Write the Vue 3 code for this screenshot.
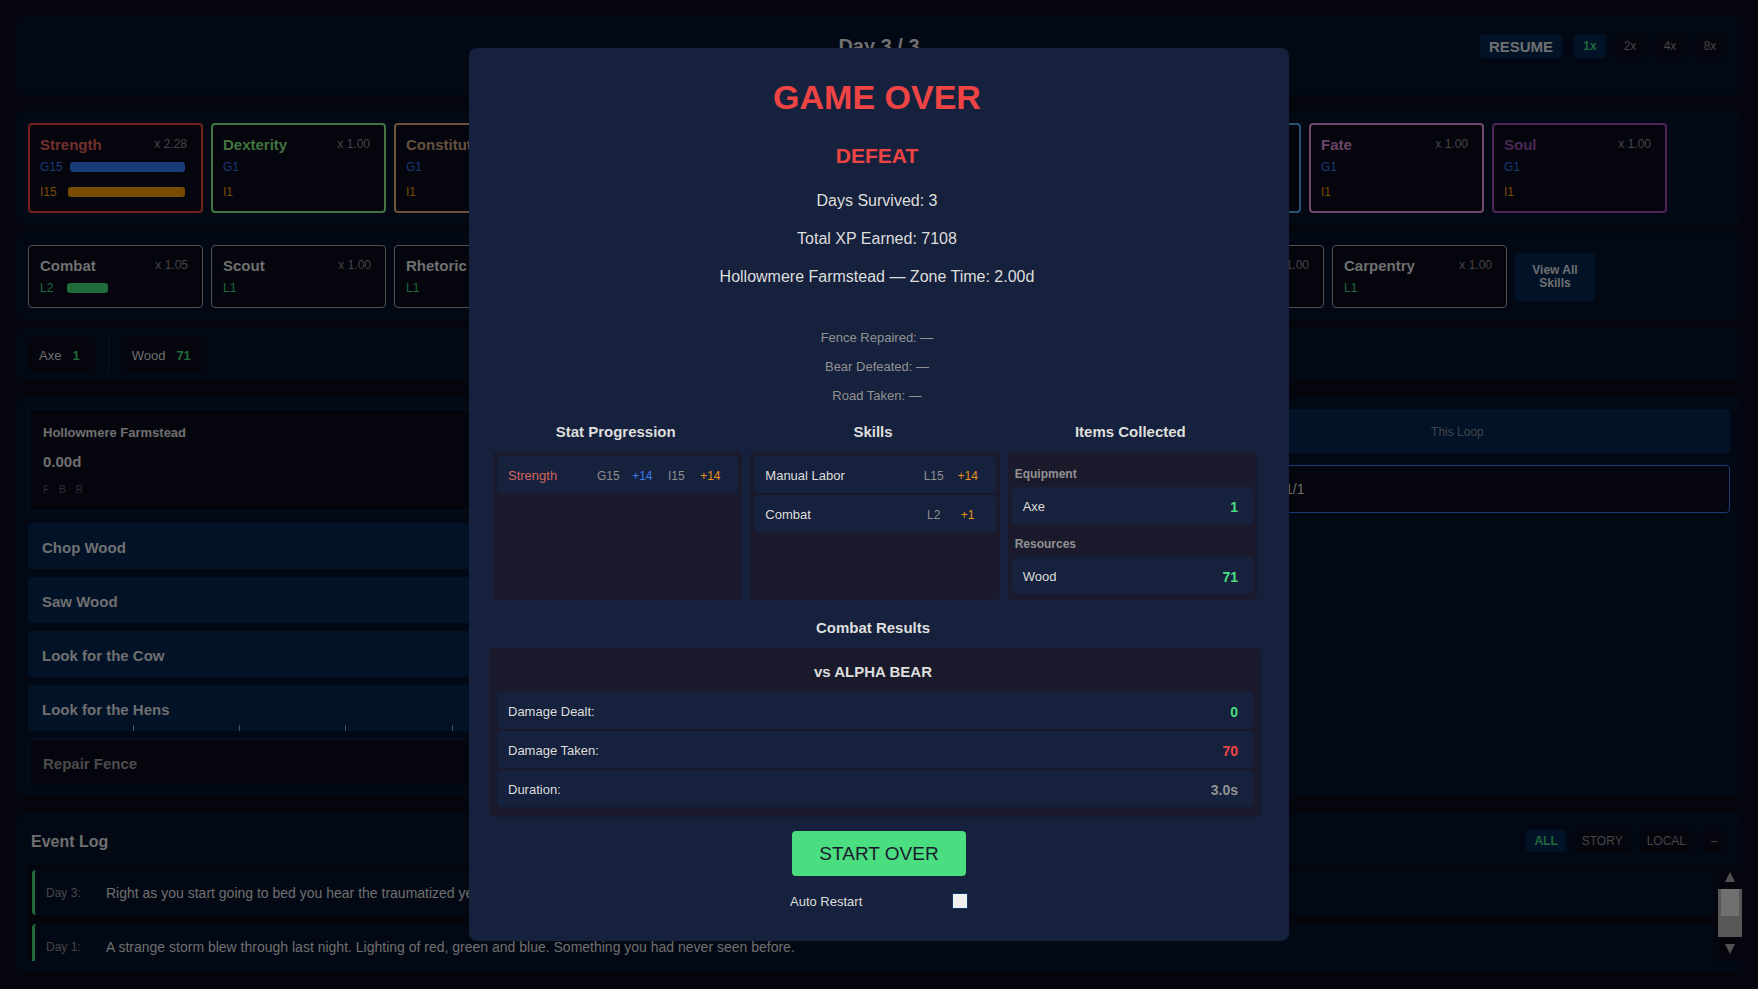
<script setup>
import { ref } from 'vue'

const speeds = ['1x', '2x', '4x', '8x']
const speed = ref('1x')

const stats = [
  { name: 'Strength', tone: 'strength', mult: 'x 2.28', global: 'G15', inner: 'I15', globalFill: 98, innerFill: 98 },
  { name: 'Dexterity', tone: 'dexterity', mult: 'x 1.00', global: 'G1', inner: 'I1' },
  { name: 'Constitution', tone: 'constitution', mult: 'x 1.00', global: 'G1', inner: 'I1' },
  { tone: 'plain' },
  { tone: 'plain' },
  { tone: 'plain' },
  { tone: 'sky' },
  { name: 'Fate', tone: 'fate', mult: 'x 1.00', global: 'G1', inner: 'I1' },
  { name: 'Soul', tone: 'soul', mult: 'x 1.00', global: 'G1', inner: 'I1' },
]

const pinnedSkills = [
  { name: 'Combat', mult: 'x 1.05', level: 'L2', fill: 34 },
  { name: 'Scout', mult: 'x 1.00', level: 'L1' },
  { name: 'Rhetoric', mult: 'x 1.00', level: 'L1' },
]
const otherSkills = [
  {},
  {},
  {},
  { mult: 'x 1.00' },
  { name: 'Carpentry', mult: 'x 1.00', level: 'L1' },
]

const actions = ['Chop Wood', 'Saw Wood', 'Look for the Cow', 'Look for the Hens']
const filters = ['ALL', 'STORY', 'LOCAL']
const filter = ref('ALL')

const log = [
  { day: 'Day 3:', text: 'Right as you start going to bed you hear the traumatized ye' },
  { day: 'Day 1:', text: 'A strange storm blew through last night. Lighting of red, green and blue. Something you had never seen before.' },
]

const summary = ['Days Survived: 3', 'Total XP Earned: 7108', 'Hollowmere Farmstead — Zone Time: 2.00d']
const milestones = ['Fence Repaired: —', 'Bear Defeated: —', 'Road Taken: —']
const skillGains = [
  { name: 'Manual Labor', level: 'L15', gain: '+14' },
  { name: 'Combat', level: 'L2', gain: '+1' },
]
const items = [
  { group: 'Equipment', name: 'Axe', count: 1 },
  { group: 'Resources', name: 'Wood', count: 71 },
]
const combat = [
  { label: 'Damage Dealt:', value: '0', tone: 'good' },
  { label: 'Damage Taken:', value: '70', tone: 'bad' },
  { label: 'Duration:', value: '3.0s', tone: 'muted' },
]
const autoRestart = ref(false)
</script>

<template>
  <div class="game">
    <header class="panel topbar">
      <span></span>
      <h2 class="day">Day 3 / 3</h2>
      <div class="controls">
        <button class="resume">RESUME</button>
        <button v-for="s in speeds" :key="s" class="speed" :class="{ active: s === speed }" @click="speed = s">{{ s }}</button>
      </div>
    </header>

    <section class="panel cards stats">
      <article v-for="(s, i) in stats" :key="i" class="card stat" :class="s.tone">
        <template v-if="s.name">
          <div class="card-head"><strong>{{ s.name }}</strong><span class="mult">{{ s.mult }}</span></div>
          <div class="level global"><span>{{ s.global }}</span><div class="track"><div v-if="s.globalFill" class="fill" :style="{ width: s.globalFill + '%' }"></div></div></div>
          <div class="level inner"><span>{{ s.inner }}</span><div class="track"><div v-if="s.innerFill" class="fill" :style="{ width: s.innerFill + '%' }"></div></div></div>
        </template>
      </article>
    </section>

    <section class="panel cards skills">
      <article v-for="(s, i) in pinnedSkills" :key="i" class="card skill">
        <div class="card-head"><strong>{{ s.name }}</strong><span class="mult">{{ s.mult }}</span></div>
        <div class="level"><span>{{ s.level }}</span><div class="track"><div v-if="s.fill" class="fill" :style="{ width: s.fill + '%' }"></div></div></div>
      </article>
      <span class="split"></span>
      <article v-for="(s, i) in otherSkills" :key="'o' + i" class="card skill">
        <div class="card-head"><strong>{{ s.name }}</strong><span class="mult">{{ s.mult }}</span></div>
        <div class="level"><span>{{ s.level }}</span></div>
      </article>
      <button class="view-all">View All<br>Skills</button>
    </section>

    <section class="panel inventory">
      <div class="chip"><span>Axe</span><strong>1</strong></div>
      <span class="divider"></span>
      <div class="chip"><span>Wood</span><strong>71</strong></div>
    </section>

    <main class="panel world">
      <div class="zone-col">
        <div class="zone">
          <h3>Hollowmere Farmstead</h3>
          <p class="time">0.00d</p>
          <p class="flags"><span>F</span><span>B</span><span>R</span></p>
        </div>
        <button v-for="(a, i) in actions" :key="a" class="action">
          {{ a }}
          <span v-if="i === 3" class="ticks"><i v-for="n in 5" :key="n"></i></span>
        </button>
        <button class="action locked" disabled>Repair Fence</button>
      </div>
      <div class="loop-col">
        <div class="tabs">
          <span></span>
          <button class="tab">This Loop</button>
        </div>
        <div class="queue"><span></span><span>1/1</span></div>
      </div>
    </main>

    <section class="panel log">
      <div class="log-head">
        <h2>Event Log</h2>
        <div class="filters">
          <button v-for="f in filters" :key="f" class="filter" :class="{ active: f === filter }" @click="filter = f">{{ f }}</button>
          <button class="filter" aria-label="Collapse log">–</button>
        </div>
      </div>
      <div class="log-body">
        <div class="entries">
          <div v-for="e in log" :key="e.day" class="entry"><span class="when">{{ e.day }}</span><span>{{ e.text }}</span></div>
        </div>
        <div class="scroller" aria-hidden="true">
          <svg width="10" height="10" viewBox="0 0 10 10"><path d="M5 0 L10 10 H0 Z" /></svg>
          <div class="thumb"><div></div></div>
          <svg width="10" height="10" viewBox="0 0 10 10"><path d="M0 0 H10 L5 10 Z" /></svg>
        </div>
      </div>
    </section>

    <div class="overlay">
      <div class="modal" role="dialog" aria-labelledby="over-title">
        <h1 id="over-title">GAME OVER</h1>
        <p class="outcome">DEFEAT</p>
        <div class="summary"><p v-for="s in summary" :key="s">{{ s }}</p></div>
        <div class="milestones"><p v-for="m in milestones" :key="m">{{ m }}</p></div>

        <div class="results">
          <section>
            <h3>Stat Progression</h3>
            <div class="box">
              <div class="row">
                <span class="str">Strength</span>
                <span class="cell">G15</span><span class="cell blue">+14</span><span class="cell">I15</span><span class="cell orange">+14</span>
              </div>
            </div>
          </section>
          <section>
            <h3>Skills</h3>
            <div class="box">
              <div v-for="s in skillGains" :key="s.name" class="row">
                <span class="label">{{ s.name }}</span>
                <span class="cell">{{ s.level }}</span><span class="cell orange">{{ s.gain }}</span>
              </div>
            </div>
          </section>
          <section>
            <h3>Items Collected</h3>
            <div class="box">
              <template v-for="it in items" :key="it.name">
                <h4>{{ it.group }}</h4>
                <div class="row wide"><span class="label">{{ it.name }}</span><strong class="good">{{ it.count }}</strong></div>
              </template>
            </div>
          </section>
        </div>

        <section class="combat">
          <h3>Combat Results</h3>
          <div class="box fight">
            <p class="versus">vs ALPHA BEAR</p>
            <div v-for="c in combat" :key="c.label" class="row wide"><span class="label">{{ c.label }}</span><strong :class="c.tone">{{ c.value }}</strong></div>
          </div>
        </section>

        <footer class="modal-foot">
          <button class="restart">START OVER</button>
          <div class="auto">
            <label for="auto-restart">Auto Restart</label>
            <input id="auto-restart" v-model="autoRestart" type="checkbox">
          </div>
        </footer>
      </div>
    </div>
  </div>
</template>

<style>
body {
  background: #05050d;
}
</style>

<style scoped>
* {
  box-sizing: border-box;
}
.game {
  display: flex;
  flex-direction: column;
  gap: 8px;
  min-height: 100vh;
  padding: 16px;
  background: #05050d;
  color: #707070;
  font-family: "Liberation Sans", Arial, sans-serif;
  font-size: 14px;
}
h1, h2, h3, h4, p {
  margin: 0;
}
button {
  border: 0;
  padding: 0;
  font-family: inherit;
  color: inherit;
  border-radius: 4px;
}
.panel {
  background: #030914;
  border-radius: 8px;
}

.topbar {
  display: grid;
  grid-template-columns: 1fr auto 1fr;
  align-items: start;
  height: 79px;
  margin-bottom: 8px;
  padding: 18px 16px;
}
.day {
  font-size: 20px;
  line-height: 24px;
}
.controls {
  display: flex;
  justify-content: flex-end;
  gap: 8px;
}
.resume {
  height: 24px;
  width: 82px;
  margin-right: 4px;
  background: #021328;
  font-size: 15px;
  font-weight: bold;
}
.speed {
  width: 32px;
  height: 24px;
  background: #05050d;
  color: #464646;
  font-size: 12px;
}
.speed.active {
  background: #021328;
  color: #1f6b3c;
  font-weight: bold;
}

.cards {
  display: flex;
  align-items: center;
  gap: 8px;
  padding: 12px;
  overflow: hidden;
}
.card {
  flex: 0 0 175px;
  background: #05050d;
  border-radius: 4px;
}
.stat {
  height: 90px;
  padding: 9px 14px 0 10px;
  border: 2px solid #404040;
}
.skill {
  height: 63px;
  padding: 9px 14px 0 11px;
  border: 1px solid #505050;
}
.card-head {
  display: flex;
  justify-content: space-between;
  align-items: center;
  height: 20px;
  margin-bottom: 2px;
}
.card-head strong {
  font-size: 15px;
}
.mult {
  color: #464646;
  font-size: 12px;
}
.level {
  display: flex;
  align-items: center;
  gap: 7px;
  height: 22px;
  color: #1f6b3c;
  font-size: 12px;
}
.track {
  flex: 1;
  height: 10px;
}
.fill {
  height: 10px;
  border-radius: 3px;
  background: currentColor;
}
.global {
  color: #193b78;
}
.inner {
  gap: 11px;
  height: 28px;
  color: #7a4b02;
}
.skill .level {
  gap: 14px;
}
.strength { border-color: #76201c; }
.strength strong { color: #73302c; }
.dexterity { border-color: #41743f; }
.dexterity strong { color: #41743f; }
.constitution { border-color: #6b563d; }
.constitution strong { color: #64523f; }
.sky { border-color: #27506f; }
.fate { border-color: #73476f; }
.fate strong { color: #6b4668; }
.soul { border-color: #4f2559; }
.soul strong { color: #4c2a57; }
.split {
  width: 15px;
}
.view-all {
  width: 80px;
  height: 48px;
  background: #021328;
  font-size: 12px;
  font-weight: bold;
  line-height: 13px;
}

.inventory {
  display: flex;
  gap: 12px;
  padding: 8px 12px;
}
.chip {
  display: flex;
  align-items: center;
  gap: 11px;
  height: 37px;
  padding: 2px 16px 0 11px;
  background: #05050d;
  border-radius: 8px;
  font-size: 13px;
}
.chip strong {
  color: #1f6b3c;
  font-size: 13px;
}
.divider {
  width: 1px;
  background: #0f1420;
}

.world {
  flex: 1 1 0;
  display: grid;
  grid-template-columns: 11fr 20fr;
  gap: 12px;
  min-height: 400px;
  margin-top: 8px;
  padding: 12px;
}
.zone-col {
  display: flex;
  flex-direction: column;
  gap: 8px;
}
.zone {
  height: 102px;
  margin-bottom: 4px;
  padding: 14px;
  background: #05050d;
  border: 1px solid #021328;
  border-radius: 4px;
}
.zone h3 {
  font-size: 13px;
  line-height: 18px;
}
.time {
  margin-top: 10px;
  font-size: 15px;
  font-weight: bold;
  line-height: 20px;
}
.flags {
  display: flex;
  gap: 10px;
  margin-top: 11px;
  color: #303032;
  font-size: 10px;
  line-height: 14px;
}
.action {
  position: relative;
  height: 46px;
  padding: 2px 14px 0;
  background: #021328;
  font-size: 15px;
  font-weight: bold;
  text-align: left;
}
.locked {
  background: #05050d;
  border: 1px solid #021328;
  border-bottom: 0;
  color: #4b4b4b;
}
.ticks {
  position: absolute;
  inset: auto 0 0 0;
  display: flex;
  height: 6px;
}
.ticks i {
  flex: 0 0 17.7%;
  border-right: 1px solid #4a505a;
}
.loop-col {
  display: flex;
  flex-direction: column;
  gap: 12px;
}
.tabs {
  display: grid;
  grid-template-columns: 1fr 1fr;
  background: #021328;
  border-radius: 4px;
}
.tab {
  height: 44px;
  padding-top: 2px;
  background: none;
  color: #43464b;
  font-size: 12px;
}
.queue {
  display: grid;
  grid-template-columns: 61fr 39fr;
  justify-items: end;
  align-items: center;
  height: 48px;
  background: #05050d;
  border: 1px solid #193b78;
  border-radius: 4px;
}
.queue span {
  grid-column: 1;
  grid-row: 1;
}

.log {
  height: 160px;
  margin-top: 8px;
  padding-bottom: 12px;
}
.log-head {
  display: flex;
  justify-content: space-between;
  align-items: center;
  height: 52px;
  padding: 4px 16px 0 15px;
}
.log-head h2 {
  padding-top: 2px;
  font-size: 16px;
}
.filters {
  display: flex;
  gap: 8px;
}
.filter {
  min-width: 24px;
  height: 22px;
  padding: 0 8px;
  background: #05050d;
  color: #464646;
  font-size: 12px;
}
.filter.active {
  background: #021328;
  color: #1f6b3c;
  font-weight: bold;
}
.log-body {
  display: flex;
  height: 96px;
  margin-left: 12px;
  background: #05050d;
  border-radius: 4px 0 0 4px;
  overflow: hidden;
}
.entries {
  flex: 1;
  display: flex;
  flex-direction: column;
  gap: 9px;
  padding: 5px 4px 0;
}
.entry {
  flex: 0 0 45px;
  display: flex;
  align-items: center;
  padding-left: 11px;
  background: #030914;
  border-left: 3px solid #1f6b3c;
  border-radius: 4px;
}
.when {
  width: 60px;
  color: #464646;
  font-size: 12px;
}
.scroller {
  display: flex;
  flex-direction: column;
  align-items: center;
  gap: 7px;
  width: 24px;
  padding-top: 7px;
}
.scroller path {
  fill: #515151;
}
.thumb {
  width: 24px;
  height: 48px;
  padding: 0 3px;
  background: #575757;
}
.thumb div {
  height: 27px;
  background: #707070;
}

.overlay {
  position: fixed;
  inset: 0;
  display: flex;
  align-items: center;
  justify-content: center;
}
.modal {
  width: 820px;
  max-width: 96%;
  padding: 29px 24px 30px 20px;
  background: #16213d;
  border-radius: 8px;
  color: #dededc;
  text-align: center;
}
h1 {
  color: #ef4444;
  font-size: 34px;
  line-height: 40px;
}
.outcome {
  margin: 26px 0 22px;
  color: #ef4444;
  font-size: 21px;
  font-weight: bold;
  line-height: 26px;
}
.summary {
  display: grid;
  gap: 18px;
  font-size: 16px;
  line-height: 20px;
}
.milestones {
  display: grid;
  gap: 14px;
  margin: 43px 0 19px;
  color: #929292;
  font-size: 13px;
  line-height: 15px;
}
.modal h3 {
  margin-bottom: 10px;
  padding-right: 4px;
  font-size: 15px;
  line-height: 20px;
}
.results {
  display: grid;
  grid-template-columns: repeat(3, 1fr);
  gap: 8px;
  margin: 0 8px 18px 4px;
}
.results section {
  display: flex;
  flex-direction: column;
}
.box {
  flex: 1;
  padding: 4px;
  background: #1a1a2c;
  border-radius: 4px;
}
.row {
  display: flex;
  align-items: center;
  height: 37px;
  margin-bottom: 2px;
  padding: 2px 11px 0;
  background: #16213d;
  border-radius: 4px;
  font-size: 13px;
}
.row.wide {
  padding-right: 15px;
}
.label, .str {
  flex: 1;
  text-align: left;
}
.str {
  color: #cf6660;
}
.cell {
  width: 34px;
  color: #8f8f8f;
  font-size: 12px;
}
.blue { color: #3b7ae8; }
.orange { color: #e8921a; }
.good { color: #4ade80; }
.bad { color: #ef4444; }
.muted { color: #929292; }
.row strong {
  font-size: 14px;
}
h4 {
  height: 31px;
  padding: 10px 3px 0;
  color: #929292;
  font-size: 12px;
  line-height: 16px;
  text-align: left;
}
.combat {
  margin-right: 4px;
}
.fight {
  padding: 8px;
}
.versus {
  margin-bottom: 4px;
  padding-right: 4px;
  font-size: 15px;
  font-weight: bold;
  line-height: 32px;
}
.modal-foot {
  margin-right: -4px;
}
.restart {
  height: 45px;
  margin: 14px 0 15px;
  padding: 0 27px;
  background: #4ade80;
  color: #1a1a2e;
  font-size: 19px;
}
.auto {
  display: flex;
  align-items: center;
  justify-content: space-between;
  width: 178px;
  height: 20px;
  margin: 0 auto;
  font-size: 13px;
}
.auto input {
  appearance: none;
  width: 16px;
  height: 16px;
  margin: 0;
  background: #f0f0f0;
  border: 1px solid #0f3460;
  border-radius: 1px;
}
.auto input:checked {
  background: #4ade80;
}
</style>
